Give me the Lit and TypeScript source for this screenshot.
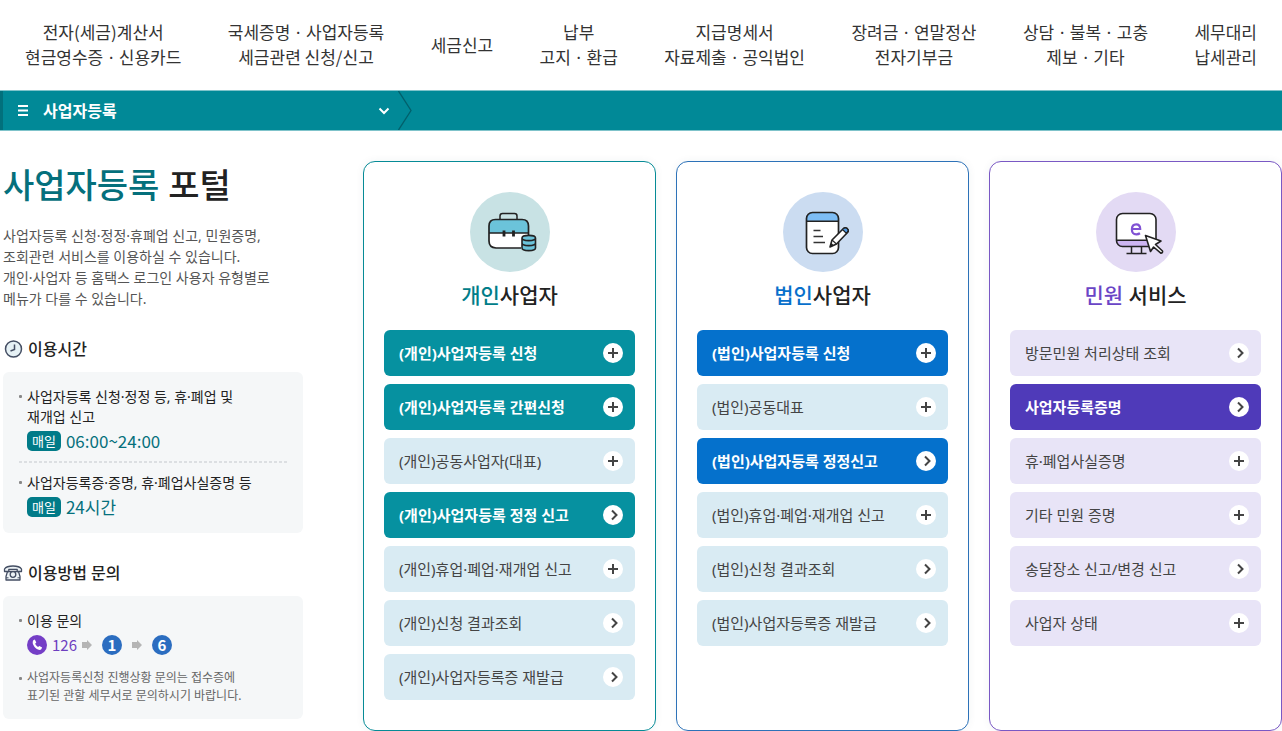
import { LitElement, html, svg, css } from "lit";
import { customElement, property } from "lit/decorators.js";
import { classMap } from "lit/directives/class-map.js";

type Item = { text: string; strong?: boolean; go?: boolean };
type Tone = "teal" | "blue" | "purple";

const NAV: string[][] = [
  ["전자(세금)계산서", "현금영수증ㆍ신용카드"],
  ["국세증명ㆍ사업자등록", "세금관련 신청/신고"],
  ["세금신고"],
  ["납부", "고지ㆍ환급"],
  ["지급명세서", "자료제출ㆍ공익법인"],
  ["장려금ㆍ연말정산", "전자기부금"],
  ["상담ㆍ불복ㆍ고충", "제보ㆍ기타"],
  ["세무대리", "납세관리"],
];

const CARDS: { tone: Tone; lead: string; rest: string; items: Item[] }[] = [
  {
    tone: "teal",
    lead: "개인",
    rest: "사업자",
    items: [
      { text: "(개인)사업자등록 신청", strong: true },
      { text: "(개인)사업자등록 간편신청", strong: true },
      { text: "(개인)공동사업자(대표)" },
      { text: "(개인)사업자등록 정정 신고", strong: true, go: true },
      { text: "(개인)휴업·폐업·재개업 신고" },
      { text: "(개인)신청 결과조회", go: true },
      { text: "(개인)사업자등록증 재발급", go: true },
    ],
  },
  {
    tone: "blue",
    lead: "법인",
    rest: "사업자",
    items: [
      { text: "(법인)사업자등록 신청", strong: true },
      { text: "(법인)공동대표" },
      { text: "(법인)사업자등록 정정신고", strong: true, go: true },
      { text: "(법인)휴업·폐업·재개업 신고" },
      { text: "(법인)신청 결과조회", go: true },
      { text: "(법인)사업자등록증 재발급", go: true },
    ],
  },
  {
    tone: "purple",
    lead: "민원",
    rest: " 서비스",
    items: [
      { text: "방문민원 처리상태 조회", go: true },
      { text: "사업자등록증명", strong: true, go: true },
      { text: "휴·폐업사실증명" },
      { text: "기타 민원 증명" },
      { text: "송달장소 신고/변경 신고", go: true },
      { text: "사업자 상태" },
    ],
  },
];

const briefcase = svg`
  <circle cx="40" cy="40" r="40" fill="#c8e2e4"/>
  <path d="M30 27v-3q0-2.500 2.500-2.500h12q2.500 0 2.500 2.500v3" fill="none" stroke="#222" stroke-width="1.500"/>
  <rect x="19" y="27.500" width="39.500" height="28.500" rx="6" fill="#fff"/>
  <path d="M19 41v-7q0-6.500 6.500-6.500h26.500q6.500 0 6.500 6.500v7z" fill="#6bc3da"/>
  <path d="M51 56H26q-7-.5-7-7V34q0-6.500 6.500-6.500H52q6.500 0 6.500 6.500v9M19 41h39.500" fill="none" stroke="#222" stroke-width="1.700"/>
  <path d="M34 38.500v6M43.500 38.500v6" stroke="#222" stroke-width="2.800"/>
  <path d="M52 46v10c0 3.500 13.500 3.500 13.500 0V46z" fill="#6bc3da"/>
  <ellipse cx="58.700" cy="46" rx="6.700" ry="2.600" fill="#6bc3da"/>
  <path d="M52 46c0-3.500 13.500-3.500 13.500 0v10c0 3.500-13.500 3.500-13.500 0zc0 3.500 13.500 3.500 13.500 0M52 51c0 3.500 13.500 3.500 13.500 0" fill="none" stroke="#222" stroke-width="1.600"/>`;

const notepad = svg`
  <circle cx="40" cy="40" r="40" fill="#cbdcf1"/>
  <rect x="23.500" y="20.500" width="32" height="41" rx="6" fill="#fff"/>
  <path d="M23.500 29v-2q0-6.500 6.500-6.500h19q6.500 0 6.500 6.500v2z" fill="#7dbdf5"/>
  <rect x="23.500" y="20.500" width="32" height="41" rx="6" fill="none" stroke="#222" stroke-width="1.700"/>
  <path d="M23.500 29.300h32" stroke="#222" stroke-width="1.500"/>
  <path d="M30.500 38.500h7M30.500 44.500h9.500M30.500 50.500h11.500" stroke="#333" stroke-width="1.700"/>
  <path d="M47 55l2-7 12-12q2.500-1 4.200 1.800v2L53.500 52z" fill="#fff" stroke="#222" stroke-width="1.600" stroke-linejoin="round"/>
  <path d="M59.500 37.500l2-1.500q3-.5 3.700 2.500l-1.700 3z" fill="#4f9be6" stroke="#222" stroke-width="1.200"/>
  <path d="M47 55l1.200-4.200 2.800 2.700z" fill="#222"/>
  <path d="M49 48l4.500 4" stroke="#222" stroke-width="1.200"/>`;

const monitor = svg`
  <circle cx="40" cy="40" r="40" fill="#e3daf4"/>
  <rect x="20.500" y="21.500" width="39.500" height="33" rx="6" fill="#fff"/>
  <path d="M20.500 48.500H60q0 6-6 6H26.500q-6 0-6-6z" fill="#cdb5f2"/>
  <rect x="20.500" y="21.500" width="39.500" height="33" rx="6" fill="none" stroke="#222" stroke-width="1.600"/>
  <path d="M20.500 48.300H58M35.500 55v6M45.500 55v6M30.500 61.500h20" fill="none" stroke="#222" stroke-width="1.500"/>
  <path d="M36.200 37h8q0-4.600-4-4.600-4.300 0-4.300 5t4.500 4.900q2 0 3.600-1" fill="none" stroke="#8152d4" stroke-width="2.200"/>
  <path d="M49.500 43.500l15.500 5.500-5.500 3.500 7 6.500q.5 1.800-1.700 2.200l-7.200-6.200-3.100 4.500z" fill="#fff" stroke="#222" stroke-width="1.600" stroke-linejoin="round"/>`;

const ART: Record<Tone, unknown> = { teal: briefcase, blue: notepad, purple: monitor };

const FONT = css`
  :host {
    font-family: "Noto Sans", "Noto Sans CJK KR", sans-serif;
    box-sizing: border-box;
  }
  *,
  *::before,
  *::after {
    box-sizing: border-box;
  }
  h1,
  h2,
  h3,
  p,
  ul {
    margin: 0;
    padding: 0;
  }
  ul {
    list-style: none;
  }
`;

@customElement("service-card")
class ServiceCard extends LitElement {
  @property() tone: Tone = "teal";
  @property() lead = "";
  @property() rest = "";
  @property({ attribute: false }) items: Item[] = [];

  static styles = [
    FONT,
    css`
      :host {
        display: block;
        min-width: 0;
      }
      .card {
        height: 100%;
        padding: 30px 20px;
        border: 1px solid var(--line);
        border-radius: 12px;
        background: #fff;
        box-shadow: 0 0 8px rgba(0, 60, 80, 0.06);
      }
      .teal {
        --line: #068b96;
        --lead: #007d89;
        --strong: #0691a0;
        --soft: #d9ebf3;
      }
      .blue {
        --line: #2d72b8;
        --lead: #0870cb;
        --strong: #0571cc;
        --soft: #d9ebf3;
      }
      .purple {
        --line: #7a58c4;
        --lead: #6a45c6;
        --strong: #4f3ab9;
        --soft: #e8e4f7;
      }
      .art {
        display: block;
        width: 80px;
        height: 80px;
        margin: 0 auto;
      }
      h2 {
        margin: 8px 0 20px;
        font-size: 21px;
        font-weight: 500;
        line-height: 30px;
        text-align: center;
        color: #222;
        white-space: pre-wrap;
      }
      .lead {
        color: var(--lead);
      }
      ul {
        display: grid;
        gap: 8px;
      }
      .item {
        display: flex;
        align-items: center;
        justify-content: space-between;
        width: 100%;
        min-height: 46px;
        padding: 0 12px 0 15px;
        border: 0;
        border-radius: 6px;
        background: var(--soft);
        color: #444;
        font-family: inherit;
        font-size: 15px;
        line-height: 22px;
        text-align: left;
        text-decoration: none;
        cursor: pointer;
      }
      .strong {
        background: var(--strong);
        color: #fff;
        font-weight: 700;
      }
      .mark {
        flex: none;
        width: 20px;
        height: 20px;
      }
    `,
  ];

  private mark(go?: boolean) {
    return html`<svg class="mark" viewBox="0 0 20 20" aria-hidden="true">
      <circle cx="10" cy="10" r="10" fill="#fff" />
      <path
        d=${go ? "M9 5.500l4.500 4.500L9 14.500" : "M10 5v10M5 10h10"}
        fill="none"
        stroke="#444"
        stroke-width="2"
      />
    </svg>`;
  }

  render() {
    return html`<section class="card ${this.tone}">
      <svg class="art" viewBox="0 0 80 80" aria-hidden="true">${ART[this.tone]}</svg>
      <h2><span class="lead">${this.lead}</span>${this.rest}</h2>
      <ul>
        ${this.items.map((i) => {
          const c = classMap({ item: true, strong: !!i.strong });
          return html`<li>
            ${i.go
              ? html`<a class=${c} href="#"><span>${i.text}</span>${this.mark(true)}</a>`
              : html`<button class=${c} type="button"><span>${i.text}</span>${this.mark()}</button>`}
          </li>`;
        })}
      </ul>
    </section>`;
  }
}

@customElement("app-root")
class AppRoot extends LitElement {
  static styles = [
    FONT,
    css`
      :host {
        display: block;
        background: #fff;
        color: #222;
      }
      .gnb {
        display: flex;
        align-items: center;
        justify-content: space-between;
        padding: 19px 25px 21px;
        font-family: "Noto Sans CJK KR", "Noto Sans", sans-serif;
      }
      .gnb a {
        font-size: 17px;
        line-height: 25px;
        color: #333;
        text-align: center;
        text-decoration: none;
        white-space: nowrap;
      }
      .gnb span {
        display: block;
      }
      .bar {
        display: flex;
        height: 41px;
        border-top: 1px solid #7fc3ca;
        border-bottom: 1px solid #7fc3ca;
        background: #018997;
      }
      .crumb {
        display: flex;
        align-items: center;
        width: 398px;
        padding: 0 8px 0 15px;
        border: 0;
        border-left: 3px solid #02707c;
        background: none;
        color: #fff;
        font-family: inherit;
        font-size: 16px;
        font-weight: 700;
        line-height: 24px;
      }
      .crumb .name {
        flex: 1;
        padding-left: 15px;
        text-align: left;
      }
      svg {
        display: block;
        flex: none;
      }
      main {
        display: grid;
        grid-template-columns: 300px minmax(0, 1fr);
        gap: 60px;
        padding: 30px 0 0 3px;
      }
      .cards {
        display: grid;
        grid-template-columns: repeat(3, minmax(0, 1fr));
        gap: 20px;
      }
      h1 {
        font-size: 34px;
        font-weight: 500;
        line-height: 48px;
      }
      h1 span {
        color: #05707c;
      }
      .desc {
        margin-top: 16px;
        font-size: 14px;
        line-height: 21px;
        color: #555;
      }
      h3 {
        display: flex;
        align-items: center;
        gap: 5px;
        margin-top: 28px;
        font-size: 16px;
        font-weight: 500;
        line-height: 24px;
      }
      .box {
        margin-top: 11px;
        padding: 15px 16px 14px;
        border-radius: 6px;
        background: #f5f7f8;
        font-size: 14px;
        line-height: 20px;
      }
      .dot {
        position: relative;
        padding-left: 8px;
      }
      .dot::before {
        content: "";
        position: absolute;
        left: 0;
        top: 8px;
        width: 3px;
        height: 3px;
        border-radius: 1px;
        background: #888;
      }
      .dot + .dot {
        margin-top: 10px;
      }
      .rule {
        height: 2px;
        margin: 8px 0 10px;
        background: repeating-linear-gradient(to right, #dcdfe2 0 3px, transparent 3px 5px);
      }
      .time {
        display: flex;
        align-items: center;
        gap: 5px;
        margin-top: 2px;
        font-family: "Noto Sans CJK KR", "Noto Sans", sans-serif;
        font-size: 17px;
        line-height: 24px;
        color: #05707c;
      }
      .tag {
        padding: 0 5px;
        border-radius: 5px;
        background: #017b88;
        color: #fff;
        font-size: 13px;
        line-height: 20px;
      }
      .call {
        display: flex;
        align-items: center;
        margin-top: 2px;
        padding-bottom: 2px;
        color: #6e3fc0;
        font-family: "Noto Sans CJK KR", "Noto Sans", sans-serif;
        font-size: 15px;
        line-height: 24px;
        gap: 5px;
      }
      .key {
        width: 20px;
        margin: 0 5px;
        border-radius: 10px;
        background: #2b6dc0;
        color: #fff;
        font-weight: 700;
        line-height: 20px;
        text-align: center;
      }
      .note {
        font-size: 12px;
        line-height: 18px;
        color: #666;
      }
    `,
  ];

  private arrow() {
    return html`<svg width="10" height="10" viewBox="0 0 10 10" aria-hidden="true">
      <path d="M0 2h5V0l5 5-5 5V8H0z" fill="#b5b5b5" />
    </svg>`;
  }

  render() {
    return html`
      <nav class="gnb">
        ${NAV.map((n) => html`<a href="#">${n.map((l) => html`<span>${l}</span>`)}</a>`)}
      </nav>
      <div class="bar">
        <button class="crumb" type="button">
          <svg width="10" height="11" viewBox="0 0 10 11" aria-hidden="true">
            <path d="M0 1h10M0 5.500h10M0 10h10" stroke="#fff" stroke-width="2" />
          </svg>
          <span class="name">사업자등록</span>
          <svg width="12" height="8" viewBox="0 0 12 8" aria-hidden="true">
            <path d="M1.500 1.500L6 6l4.500-4.500" fill="none" stroke="#fff" stroke-width="2" />
          </svg>
        </button>
        <svg width="14" height="39" viewBox="0 0 14 39" aria-hidden="true">
          <path d="M.5 0L13 19.500.5 39" fill="none" stroke="#02606b" stroke-width="1.300" />
        </svg>
      </div>
      <main>
        <aside>
          <h1><span>사업자등록</span> 포털</h1>
          <p class="desc">
            사업자등록 신청·정정·휴폐업 신고, 민원증명,<br />조회관련 서비스를 이용하실 수
            있습니다.<br />개인·사업자 등 홈택스 로그인 사용자 유형별로<br />메뉴가 다를 수 있습니다.
          </p>
          <h3>
            <svg width="20" height="20" viewBox="0 0 20 20" aria-hidden="true">
              <circle cx="10.500" cy="10" r="8" fill="#e6f1f5" stroke="#444e63" stroke-width="1.500" />
              <path d="M11.500 5.500V10.500L7.500 12" fill="none" stroke="#444e63" stroke-width="1.500" />
            </svg>
            이용시간
          </h3>
          <div class="box">
            <div class="dot">
              <p>사업자등록 신청·정정 등, 휴·폐업 및<br />재개업 신고</p>
              <p class="time"><span class="tag">매일</span>06:00~24:00</p>
            </div>
            <div class="rule"></div>
            <div class="dot">
              <p>사업자등록증·증명, 휴·폐업사실증명 등</p>
              <p class="time"><span class="tag">매일</span>24시간</p>
            </div>
          </div>
          <h3>
            <svg width="20" height="20" viewBox="0 0 20 20" aria-hidden="true">
              <g fill="#edf3f6" stroke="#444e63" stroke-width="1.300" stroke-linejoin="round">
                <path d="M4.500 8.500L3 13.500V17h14v-3.500l-1.500-5z" />
                <path d="M1.500 8.500V6q2-3 8.500-3t8.500 3v2.500h-4.300V6.300H5.800v2.200z" />
                <circle cx="10" cy="11.500" r="2.800" />
              </g>
              <path d="M3 14.800h2.500M14.500 14.800H17" stroke="#444e63" />
            </svg>
            이용방법 문의
          </h3>
          <div class="box">
            <div class="dot">
              <p>이용 문의</p>
              <p class="call">
                <svg width="20" height="20" viewBox="0 0 20 20" aria-hidden="true">
                  <circle cx="10" cy="10" r="10" fill="#743ec6" />
                  <path
                    d="M6.300 5.200l1.500-.7 1.500 3-1.200 1.300q.8 2 2.900 3.200l1.400-1.100 2.700 1.700-.8 1.600q-1.200 1.300-3.400.3-4-2-5.200-6.300-.1-1.800.6-3z"
                    fill="#fff"
                  />
                </svg>
                <span>126</span>${this.arrow()}<span class="key">1</span>${this.arrow()}<span
                  class="key"
                  >6</span
                >
              </p>
            </div>
            <p class="dot note">
              사업자등록신청 진행상황 문의는 접수증에<br />표기된 관할 세무서로 문의하시기 바랍니다.
            </p>
          </div>
        </aside>
        <div class="cards">
          ${CARDS.map(
            (c) =>
              html`<service-card
                .tone=${c.tone}
                .lead=${c.lead}
                .rest=${c.rest}
                .items=${c.items}
              ></service-card>`
          )}
        </div>
      </main>
    `;
  }
}
